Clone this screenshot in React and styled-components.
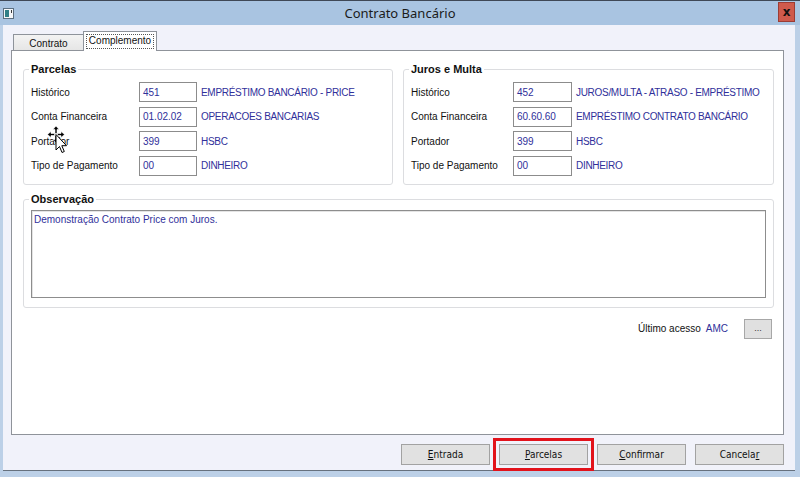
import React from "react"
import styled, { createGlobalStyle, css } from "styled-components"

const GlobalStyle = createGlobalStyle`
  html, body {
    margin: 0;
    padding: 0;
  }
  body {
    width: 800px;
    height: 477px;
    overflow: hidden;
    font-family: "Liberation Sans", Arial, sans-serif;
    font-size: 10px;
    color: #111;
  }
`

const PARCELAS = [
  { label: "Histórico", code: "451", desc: "EMPRÉSTIMO BANCÁRIO - PRICE" },
  { label: "Conta Financeira", code: "01.02.02", desc: "OPERACOES BANCARIAS" },
  { label: "Portador", code: "399", desc: "HSBC" },
  { label: "Tipo de Pagamento", code: "00", desc: "DINHEIRO" },
]

const JUROS = [
  { label: "Histórico", code: "452", desc: "JUROS/MULTA - ATRASO - EMPRÉSTIMO" },
  { label: "Conta Financeira", code: "60.60.60", desc: "EMPRÉSTIMO CONTRATO BANCÁRIO" },
  { label: "Portador", code: "399", desc: "HSBC" },
  { label: "Tipo de Pagamento", code: "00", desc: "DINHEIRO" },
]

const BUTTONS = [
  { pre: "", key: "E", post: "ntrada" },
  { pre: "", key: "P", post: "arcelas", highlight: true },
  { pre: "", key: "C", post: "onfirmar" },
  { pre: "Cancela", key: "r", post: "" },
]

const FieldGroup = ({ title, rows, labelWidth, inputWidth, children }) => (
  <Group>
    <Legend>{title}</Legend>
    <Rows>
      {rows.map((row) => (
        <Row key={row.label} $labelWidth={labelWidth} $inputWidth={inputWidth}>
          <Label>{row.label}</Label>
          <CodeBox>{row.code}</CodeBox>
          <Desc>{row.desc}</Desc>
        </Row>
      ))}
    </Rows>
    {children}
  </Group>
)

const MoveCursor = () => (
  <Cursor width="22" height="30" viewBox="0 0 22 30">
    <g fill="#000" stroke="#fff" strokeWidth="0.6">
      <path d="M9 0 L12 3.5 L10 3.5 L10 7.5 L8 7.5 L8 3.5 L6 3.5 Z" />
      <path d="M9 17 L12 13.5 L10 13.5 L10 9.5 L8 9.5 L8 13.5 L6 13.5 Z" />
      <path d="M0.5 8.5 L4 5.5 L4 7.5 L7.5 7.5 L7.5 9.5 L4 9.5 L4 11.5 Z" />
      <path d="M17.5 8.5 L14 5.5 L14 7.5 L10.5 7.5 L10.5 9.5 L14 9.5 L14 11.5 Z" />
    </g>
    <path
      d="M9 8.5 L9 24 L12.5 20.5 L15 26.5 L17.3 25.5 L14.8 19.7 L19.5 19.7 Z"
      fill="#fff"
      stroke="#000"
      strokeWidth="1"
      strokeLinejoin="round"
    />
  </Cursor>
)

const App = () => {
  return (
    <>
      <GlobalStyle />
      <Window>
        <TitleBar>
          <WindowIcon width="11" height="11" viewBox="0 0 11 11">
            <rect x="0.5" y="0.5" width="10" height="10" fill="#f4f6f8" stroke="#5b6f80" />
            <rect x="2" y="2" width="4" height="7" fill="#2f7f86" />
            <rect x="8" y="2" width="1" height="3" fill="#3a3a3a" />
          </WindowIcon>
          <Title>Contrato Bancário</Title>
          <CloseButton>x</CloseButton>
        </TitleBar>

        <Client>
          <TabList>
            <Tab>Contrato</Tab>
            <Tab $active>
              <TabFocus>Complemento</TabFocus>
            </Tab>
          </TabList>

          <Panel>
            <TopGroups>
              <FieldGroup
                title="Parcelas"
                rows={PARCELAS}
                labelWidth={108}
                inputWidth={62}
              >
                <MoveCursor />
              </FieldGroup>
              <FieldGroup
                title="Juros e Multa"
                rows={JUROS}
                labelWidth={102}
                inputWidth={63}
              />
            </TopGroups>

            <ObsGroup>
              <Legend>Observação</Legend>
              <Memo>Demonstração Contrato Price com Juros.</Memo>
            </ObsGroup>

            <AccessRow>
              <span>Último acesso</span>
              <AccessUser>AMC</AccessUser>
              <SmallButton>...</SmallButton>
            </AccessRow>
          </Panel>

          <ButtonBar>
            {BUTTONS.map((b) => (
              <ActionButton key={b.key + b.post} $highlight={b.highlight}>
                <span>
                  {b.pre}
                  <u>{b.key}</u>
                  {b.post}
                </span>
              </ActionButton>
            ))}
          </ButtonBar>
        </Client>
        <BottomEdge />
      </Window>
    </>
  )
}

export default App

const Window = styled.div`
  width: 800px;
  height: 477px;
  box-sizing: border-box;
  display: flex;
  flex-direction: column;
  padding: 0 5px 0 3px;
  border-top: 1px solid #3f4856;
  background: #bcd0e7;
`

const TitleBar = styled.header`
  position: relative;
  flex: 0 0 24px;
  display: flex;
  align-items: center;
  justify-content: center;
  margin: 0 -5px 0 -3px;
  background: #a9c4e1;
`

const WindowIcon = styled.svg`
  position: absolute;
  left: 3px;
  top: 7px;
`

const Title = styled.h1`
  margin: 0;
  font-family: "Noto Sans", "Open Sans", sans-serif;
  font-size: 13px;
  font-weight: normal;
  color: #1b1b1b;
`

const CloseButton = styled.div`
  position: absolute;
  right: 5px;
  top: 1px;
  width: 17px;
  height: 20px;
  box-sizing: border-box;
  display: grid;
  place-items: center;
  border: 1px solid #9c3c34;
  background: #cf5a4c;
  font-family: "DejaVu Sans", sans-serif;
  font-weight: bold;
  font-size: 12px;
  line-height: 1;
  color: #111;
`

const Client = styled.div`
  flex: 0 0 446px;
  box-sizing: border-box;
  display: flex;
  flex-direction: column;
  padding: 6px 11px 0 8px;
  background: #f1f2fa;
  border-bottom: 1px solid #66717e;
`

const TabList = styled.div`
  position: relative;
  z-index: 1;
  display: flex;
  align-items: flex-end;
  height: 19px;
  padding-left: 2px;
`

const Tab = styled.div`
  box-sizing: border-box;
  display: flex;
  align-items: center;
  justify-content: center;
  border: 1px solid #8e939b;
  border-bottom: none;
  ${({ $active }) =>
    $active
      ? css`
          width: 74px;
          height: 20px;
          margin-bottom: -1px;
          background: #fff;
        `
      : css`
          width: 70px;
          height: 16px;
          padding-top: 1px;
          border-right: none;
          background: linear-gradient(#f3f3f3, #e6e6e6);
        `}
`

const TabFocus = styled.span`
  padding: 0 2px 1px;
  border: 1px dotted #555;
  line-height: 12px;
`

const Panel = styled.section`
  flex: 0 0 385px;
  box-sizing: border-box;
  display: flex;
  flex-direction: column;
  padding: 12px 9px 0 11px;
  border: 1px solid #8f939a;
  background: #fff;
`

const TopGroups = styled.div`
  display: grid;
  grid-template-columns: 370px 371px;
  gap: 10px;
`

const Group = styled.fieldset`
  position: relative;
  min-width: 0;
  margin: 0;
  padding: 0 7px 8px;
  border: 1px solid #dcdde0;
  border-radius: 3px;
`

const Legend = styled.legend`
  margin-left: -2px;
  padding: 0 2px;
  font-family: "Liberation Sans", Arial, sans-serif;
  font-size: 11px;
  font-weight: bold;
  line-height: 13px;
  color: #111;
`

const Rows = styled.div`
  display: flex;
  flex-direction: column;
  gap: 4.6px;
  margin-top: 6px;
`

const Row = styled.div`
  display: grid;
  grid-template-columns: ${({ $labelWidth, $inputWidth }) =>
    `${$labelWidth}px ${$inputWidth}px 1fr`};
  align-items: center;
  height: 20px;
`

const Label = styled.span`
  white-space: nowrap;
`

const CodeBox = styled.div`
  box-sizing: border-box;
  width: calc(100% - 4px);
  height: 20px;
  padding: 0 3px;
  display: flex;
  align-items: center;
  border: 1px solid #8c8c8c;
  color: #30309a;
`

const Desc = styled.span`
  white-space: nowrap;
  letter-spacing: -0.3px;
  color: #30309a;
`

const Cursor = styled.svg`
  position: absolute;
  left: 23px;
  top: 50px;
`

const ObsGroup = styled(Group)`
  margin-top: 8px;
  padding: 0 7px 9px;
`

const Memo = styled.div`
  height: 88px;
  box-sizing: border-box;
  margin-top: 4px;
  padding: 3px 2px;
  border: 1px solid #8d8d8d;
  box-shadow: inset 1px 1px 0 #e4e4e4;
  color: #30309a;
`

const AccessRow = styled.div`
  display: flex;
  align-items: center;
  justify-content: flex-end;
  gap: 5px;
  margin-top: 11px;
  padding-right: 2px;
`

const AccessUser = styled.span`
  margin-right: 11px;
  color: #30309a;
`

const SmallButton = styled.div`
  width: 28px;
  height: 20px;
  box-sizing: border-box;
  display: grid;
  place-items: center;
  padding-bottom: 2px;
  border: 1px solid #a7a7a7;
  background: #e0e0e0;
  font-size: 9px;
  color: #333;
`

const ButtonBar = styled.div`
  display: flex;
  justify-content: flex-end;
  gap: 9px;
  padding-top: 9px;
`

const ActionButton = styled.div`
  width: 89px;
  height: 21px;
  box-sizing: border-box;
  display: flex;
  align-items: center;
  justify-content: center;
  border: 1px solid #a2a2a2;
  background: #e1e1e1;
  font-family: "Liberation Sans Narrow", "DejaVu Sans Condensed", sans-serif;
  font-size: 10px;
  white-space: nowrap;
  color: #111;

  ${({ $highlight }) =>
    $highlight &&
    css`
      outline: 3px solid #e2121b;
      outline-offset: 3px;
    `}

  u {
    text-underline-offset: 1px;
  }
`

const BottomEdge = styled.div`
  flex: 1;
`
